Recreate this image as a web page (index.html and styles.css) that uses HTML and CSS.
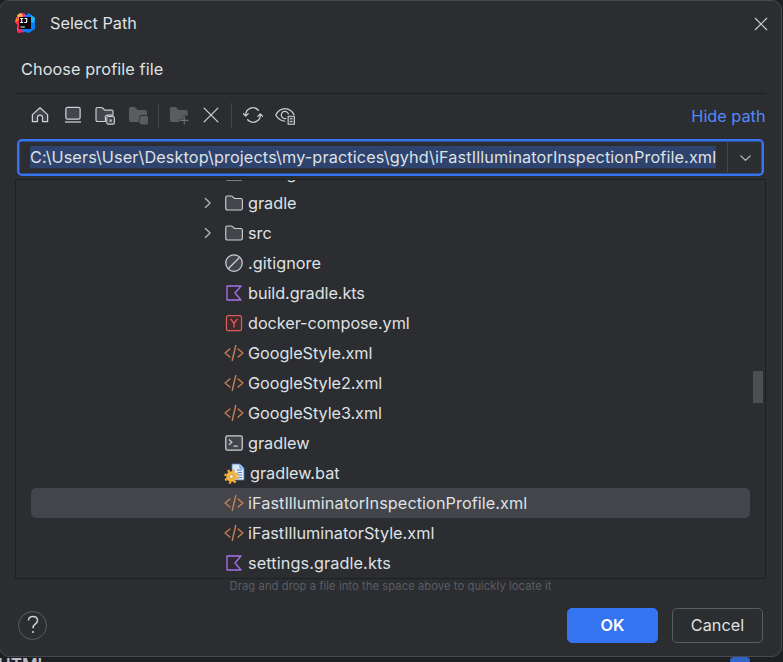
FILE: index.html
```
<!DOCTYPE html>
<html lang="en">
<head>
<meta charset="utf-8">
<title>Select Path</title>
<link rel="stylesheet" href="styles.css">
</head>
<body>
<svg class="defs" width="0" height="0" aria-hidden="true">
  <symbol id="folder" viewBox="0 0 16 16"><path d="M1.4 3.6c0-.7.5-1.2 1.2-1.2h3.2c.3 0 .6.1.8.3L8.4 4.4h4.9c.8 0 1.4.6 1.4 1.4v6.4c0 .8-.6 1.4-1.4 1.4H2.8c-.8 0-1.4-.6-1.4-1.4z" fill="#43454a" stroke="#ced0d6" stroke-width=".9"/></symbol>
  <symbol id="xml" viewBox="0 0 16 16"><path d="M4.7 4.8.9 8l3.8 3.2M11.3 4.8 15.1 8l-3.8 3.2M9.4 2.1 6.6 13.9" fill="none" stroke="#c77d55" stroke-width="1.2" stroke-linecap="round" stroke-linejoin="round"/></symbol>
  <symbol id="kts" viewBox="0 0 16 16"><path d="M2.4 2.4h11.2L8.8 8l4.8 5.6H2.4z" fill="#2f2936" stroke="#a571e6" stroke-width="1.05" stroke-linejoin="round"/></symbol>
  <symbol id="chevron" viewBox="0 0 16 16"><path d="m6.7 4.4 3.8 3.6-3.8 3.6" fill="none" stroke="#b4b8bf" stroke-width="1" stroke-linecap="round" stroke-linejoin="round"/></symbol>
</svg>
<main class="dialog">
  <header class="titlebar">
    <svg class="logo" viewBox="0 0 20 20">
      <path d="M1 5 5 0l5 1 2 5-5 12-4 2-1-4 1-4-3-3z" fill="#fc801d"/>
      <path d="M1 9 4 7l6 12-7 1 0-5z" fill="#fe2857"/>
      <path d="M5 0 10 1l3 5H4L1 5z" fill="#ff318c"/>
      <path d="M2 2 6 0l2 3-4 3z" fill="#fdb63c"/>
      <path d="m9 4 5-4 6 5v11l-6 4-7-2z" fill="#087cfa"/>
      <path d="m16 2 4 3-1 5-3-1z" fill="#21b8ed"/>
      <path d="M4 4h12v12H4z" fill="#090408"/>
      <path d="M5.2 5.5h3M5.2 9.5h3M6.7 5.5v4M9.5 5.5h2.2v3q0 1-1 1H9.2M5.5 14h4.3" fill="none" stroke="#fff" stroke-width="1.1"/>
    </svg>
    <span class="title">Select Path</span>
    <svg class="close" viewBox="0 0 14 14"><path d="m1 1 12 12M13 1 1 13" stroke="#ced0d6" stroke-width="1.2"/></svg>
  </header>
  <p class="description">Choose profile file</p>
  <nav class="toolbar">
    <span class="tool"><svg viewBox="0 0 16 16"><path d="m1.9 7.7 6.1-5.5 6.1 5.5v5.5H10V10q0-2-2-2t-2 2v3.2H1.9z" fill="#43454a" stroke="#ced0d6" stroke-linejoin="round"/></svg></span>
    <span class="tool"><svg viewBox="0 0 16 16"><rect x="2.3" y="1.9" width="11.4" height="9.4" rx="1.3" fill="#43454a" stroke="#ced0d6"/><path d="M1.6 13.6h12.8" stroke="#ced0d6"/></svg></span>
    <span class="tool"><svg viewBox="0 0 16 16"><path d="M8.3 13.2H2q-1.2 0-1.2-1.2V3.2Q.8 2 2 2h3.1q.6 0 1 .4l1.7 1.7h5.4q1.2 0 1.2 1.2v2.8H9.8q-1 0-1.5 1z" fill="#43454a" stroke="#ced0d6" stroke-width=".9"/><rect x="9.4" y="9.2" width="6.1" height="6.1" rx="1.2" fill="#43454a" stroke="#ced0d6" stroke-width=".9"/><rect x="11.5" y="11.5" width="2" height="2" fill="#a8adbd"/></svg></span>
    <span class="tool"><svg viewBox="0 0 16 16"><path d="M.8 3q0-1.4 1.4-1.4h3.2l2.5 2.3h5.7q1.5 0 1.5 1.5v2.5h-4q-2.3 0-2.3 2.2v3.5H2.3Q.8 13.6.8 12z" fill="#5a5d60"/><rect x="9.3" y="8.7" width="6.9" height="6.9" rx="1.7" fill="#5a5d60"/></svg></span>
    <span class="separator"></span>
    <span class="tool"><svg viewBox="0 0 16 16"><path d="M.7 3q0-1.4 1.4-1.4h3.2l2.5 2.3h5.7Q15 3.9 15 5.4v2.9h-3.4v3H8.4v2.3H2.2Q.7 13.6.7 12z" fill="#5a5d60"/><path d="M12.2 9v6.6M8.9 12.3h6.6" stroke="#6f737a" stroke-width=".9"/></svg></span>
    <span class="tool"><svg viewBox="0 0 16 16"><path d="m2.5 2.5 11 11M13.5 2.5l-11 11" stroke="#ced0d6" stroke-linecap="round"/></svg></span>
    <span class="separator"></span>
    <span class="tool refresh"><svg viewBox="0 0 16 16"><path d="M12.3 4.2A5.8 5.8 0 0 0 2.2 8.6M3.7 11.8A5.8 5.8 0 0 0 13.8 7.4M.3 6.9l1.9 2 2-2M11.8 9.1l2-2 1.9 2" fill="none" stroke="#ced0d6" stroke-linecap="round" stroke-linejoin="round"/></svg></span>
    <span class="tool"><svg viewBox="0 0 16 16"><path d="M8.3 13Q3.2 12.7.6 8 3.2 2.8 8 2.8T15.4 8" fill="none" stroke="#ced0d6"/><path d="M9 10.7A2.9 2.9 0 1 1 10.8 7.5" fill="none" stroke="#ced0d6"/><path d="M10.5 9h5v6.4h-5zM12 11h2M12 13.2h2" fill="#43454a" stroke="#ced0d6" stroke-width=".9"/></svg></span>
    <a class="hide-path">Hide path</a>
  </nav>
  <div class="path-field">
    <div class="path-value"><span class="selection">C:\Users\User\Desktop\projects\my-practices\gyhd\iFastIlluminatorInspectionProfile.xml</span></div>
    <div class="dropdown"><svg viewBox="0 0 12 12"><path d="m2.2 4.7 3.8 3.6 3.8-3.6" fill="none" stroke="#b4b8bf" stroke-width="1.1" stroke-linecap="round" stroke-linejoin="round"/></svg></div>
  </div>
  <section class="tree">
    <ul class="rows">
      <li class="row"><svg class="arrow"><use href="#chevron"/></svg><svg class="icon"><use href="#folder"/></svg><span>config</span></li>
      <li class="row"><svg class="arrow"><use href="#chevron"/></svg><svg class="icon"><use href="#folder"/></svg><span>gradle</span></li>
      <li class="row"><svg class="arrow"><use href="#chevron"/></svg><svg class="icon"><use href="#folder"/></svg><span>src</span></li>
      <li class="row loose"><svg class="icon leaf" viewBox="0 0 16 16"><circle cx="8" cy="8" r="6.6" fill="#43454a" stroke="#ced0d6"/><path d="m3.4 12.6 9.2-9.2" stroke="#ced0d6"/></svg><span>.gitignore</span></li>
      <li class="row tight"><svg class="icon leaf"><use href="#kts"/></svg><span>build.gradle.kts</span></li>
      <li class="row tight"><svg class="icon leaf" viewBox="0 0 16 16"><rect x="2" y="2" width="12" height="12" rx="1.5" fill="#402929" stroke="#db5c5c"/><path d="m5.3 4.7 2.7 3.5 2.7-3.5M8 8.2v3.3" fill="none" stroke="#db5c5c" stroke-width="1.1"/></svg><span>docker-compose.yml</span></li>
      <li class="row tight"><svg class="icon leaf"><use href="#xml"/></svg><span>GoogleStyle.xml</span></li>
      <li class="row tight"><svg class="icon leaf"><use href="#xml"/></svg><span>GoogleStyle2.xml</span></li>
      <li class="row tight"><svg class="icon leaf"><use href="#xml"/></svg><span>GoogleStyle3.xml</span></li>
      <li class="row"><svg class="icon leaf" viewBox="0 0 16 16"><rect x="1.4" y="2.2" width="13.2" height="11.5" rx="1.3" fill="#43454a" stroke="#ced0d6"/><path d="m4 5.2 2.3 2.1L4 9.4M7.6 10.4H11" fill="none" stroke="#ced0d6"/></svg><span>gradlew</span></li>
      <li class="row bat"><svg class="icon leaf" viewBox="0 0 20 20"><path d="M8 1h8l4 4v12H8z" fill="#d8e9fb" stroke="#4d82c4" stroke-width=".8"/><path d="M16 1v4h4M13 7h5M14 9.5h4M14 12h4M15 14.5h3" fill="none" stroke="#4d82c4" stroke-width=".9"/><circle cx="7.5" cy="13.5" r="6.2" fill="none" stroke="#f0a72d" stroke-width="2.2" stroke-dasharray="2.43 2.44"/><circle cx="7.5" cy="13.5" r="3.9" fill="#fff3cc" stroke="#f5b43d" stroke-width="2.8"/><circle cx="7.5" cy="13.5" r="2" fill="#fff3cc" stroke="#a9741f" stroke-width=".8"/></svg><span>gradlew.bat</span></li>
      <li class="row loose selected"><svg class="icon leaf"><use href="#xml"/></svg><span>iFastIlluminatorInspectionProfile.xml</span></li>
      <li class="row"><svg class="icon leaf"><use href="#xml"/></svg><span>iFastIlluminatorStyle.xml</span></li>
      <li class="row settings"><svg class="icon leaf"><use href="#kts"/></svg><span>settings.gradle.kts</span></li>
    </ul>
    <div class="scroll-thumb"></div>
  </section>
  <p class="hint">Drag and drop a file into the space above to quickly locate it</p>
  <footer class="actions">
    <button class="help" aria-label="Help"><svg viewBox="0 0 12 20"><path d="M1.5 5.5Q1.5 1.5 6 1.5t4.5 4q0 2-2.3 3.7Q6 10.8 6 13.2" fill="none" stroke="#ced0d6" stroke-width="1.5"/><circle cx="6" cy="17" r="1.1" fill="#ced0d6"/></svg></button>
    <button class="button primary">OK</button>
    <button class="button">Cancel</button>
  </footer>
</main>
<div class="backdrop"><span>HTML</span><i></i></div>
</body>
</html>
```
FILE: styles.css
```
* { box-sizing: border-box; }
body {
  margin: 0;
  width: 783px;
  height: 662px;
  overflow: hidden;
  background: #1e1f22;
  color: #dfe1e5;
  font: 16.25px/20px Inter, "Liberation Sans", sans-serif;
}
p, ul { margin: 0; padding: 0; list-style: none; }
svg { display: block; flex: none; }
.defs { position: absolute; }
.dialog {
  width: 783px;
  height: 657px;
  margin-left: -1px;
  padding: 0 16px;
  background: #2b2d30;
  border: 1px solid #47494d;
  border-radius: 10px;
}
.titlebar { display: flex; align-items: center; height: 45px; margin-right: -3px; padding-bottom: 1px; }
.logo { width: 20px; height: 20px; margin-left: -1px; }
.title { margin-left: 15px; }
.close { width: 14px; height: 14px; margin: 2px 0 0 auto; }
.description { height: 47px; padding: 13px 0 0 5px; letter-spacing: .1px; }
.toolbar {
  display: flex;
  align-items: center;
  height: 46px;
  margin: 0 -1px;
  padding: 0 .5px 3px 8.75px;
  border-top: 1px solid #1e1f22;
}
.tool { display: flex; justify-content: center; width: 32.5px; }
.tool svg { width: 20px; height: 20px; }
.refresh { padding-left: 1px; }
.separator { width: 1px; height: 25px; margin: 0 3.75px; background: #43454a; }
.hide-path { margin-left: auto; color: #548af7; padding-top: 1px; }
.path-field {
  display: flex;
  height: 37px;
  margin: 0 1px;
  border: 2px solid #3574f0;
  border-radius: 5px;
  background: #2b2d30;
  box-shadow: inset 0 0 0 .5px #3574f0;
}
.path-value { flex: 1; display: flex; align-items: center; padding: 0 0 1px 11px; white-space: nowrap; }
.selection { height: 22px; line-height: 22px; background: #2e436e; letter-spacing: .115px; }
.dropdown { width: 35px; display: flex; align-items: center; justify-content: center; border-left: 1px solid #43454a; }
.dropdown svg { width: 15px; height: 15px; }
.tree {
  position: relative;
  height: 400px;
  margin: 3px -1px 0;
  border: 1px solid #1e1f22;
  overflow: hidden;
}
.rows { margin: -22px 15px 0; }
.row { display: flex; align-items: center; height: 30px; padding-left: 166px; border-radius: 5px; }
.arrow { width: 20px; height: 20px; margin-right: 7px; }
.icon { width: 20px; height: 20px; margin-right: 4px; overflow: visible; }
.leaf { margin-left: 27px; }
.bat .icon { margin-right: 6px; }
.tight { letter-spacing: -.07px; }
.loose { letter-spacing: .06px; }
.settings { letter-spacing: .1px; }
.selected { background: #43454a; }
.scroll-thumb { position: absolute; right: 2px; top: 191px; width: 10px; height: 32px; background: #4d4e51; }
.hint { height: 15px; text-align: center; color: #5a5d63; font-size: 11.25px; line-height: 14px; letter-spacing: .05px; }
.actions { display: flex; align-items: center; height: 62px; padding: 0 2px 0 2px; }
.help {
  display: grid;
  place-items: center;
  width: 29px;
  height: 29px;
  margin-right: auto;
  padding: 0;
  border: 1px solid #5a5d63;
  border-radius: 50%;
  background: none;
}
.help svg { width: 12px; height: 20px; }
.button {
  width: 91px;
  height: 35px;
  margin-left: 14px;
  padding: 0;
  border: 1px solid #5a5d63;
  border-radius: 5px;
  background: #2b2d30;
  color: #dfe1e5;
  font: inherit;
}
.primary { border-color: #3574f0; background: #3574f0; color: #fff; font-weight: 600; }
.backdrop { display: flex; justify-content: space-between; height: 5px; overflow: hidden; font-size: 17px; font-weight: 600; color: #bcbec4; }
.backdrop span { margin: 0 0 0 -2px; line-height: 16px; }
.backdrop i { width: 20px; height: 10px; margin-right: 33px; border-radius: 4px 4px 0 0; background: #3063ca; }
```
